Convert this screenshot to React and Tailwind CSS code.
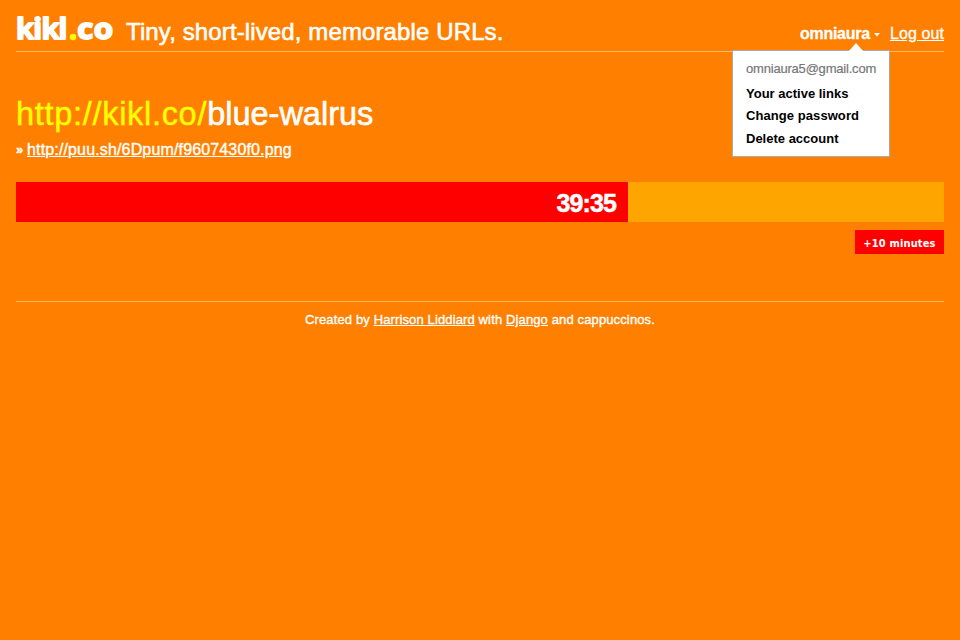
function Logo() {
  return (
    <svg width="98" height="32" viewBox="0 0 98 32" className="block shrink-0 overflow-visible" fontFamily="Open Sans, sans-serif" fontWeight="700" fontSize="29" strokeWidth="1.8" strokeLinejoin="round" strokeLinecap="round">
      <text x="-0.1 17.2 25.6 42.6" y="26.3" fill="#fff" stroke="#fff">kikl</text>
      <circle cx="57" cy="24" r="3.2" fill="#ff0" />
      <g transform="translate(61.3 26.3) scale(1.08 1)">
        <text x="0 15.3" y="0" fill="#fff" stroke="#fff">co</text>
      </g>
    </svg>
  );
}

function AccountMenu() {
  return (
    <div className="absolute right-[54px] top-[50px] h-[107px] w-[158px] border border-[#aaaaaa] bg-white px-[13px] pt-[9px] text-[13px] leading-[18px] text-black">
      <svg width="16" height="9" viewBox="0 0 16 9" className="absolute left-[115px] top-[-8px]">
        <path d="M0 9 8 0 16 9Z" fill="#fff" />
      </svg>
      <p className="whitespace-nowrap text-[#777777] tracking-[-0.2px] [-webkit-text-stroke:0.2px_#777777]">omniaura5@gmail.com</p>
      <ul className="mt-[5px] font-bold leading-[22.4px]">
        <li>Your active links</li>
        <li className="tracking-[0.07px]">Change password</li>
        <li>Delete account</li>
      </ul>
    </div>
  );
}

export default function App() {
  return (
    <div className="min-h-screen bg-[#ff8000] px-4 font-['Liberation_Sans',Arial,sans-serif] text-white">
      <header className="relative flex h-[52px] items-start border-b border-[#ffb666]">
        <div className="pt-[13px]"><Logo /></div>
        <p className="ml-[12px] mt-[16px] whitespace-nowrap text-[24px] leading-[32px] tracking-[0.12px] [-webkit-text-stroke:0.6px_white]">Tiny, short-lived, memorable URLs.</p>
        <div className="ml-auto flex pt-[23px] text-[16px] leading-[22px]">
          <span className="font-bold tracking-[-0.25px] [-webkit-text-stroke:0.3px_white]">omniaura</span>
          <svg width="6" height="4" viewBox="0 0 6 4" className="ml-[4px] mt-[10px]"><path d="M0 0H6L3 3.5Z" fill="#fff" /></svg>
          <a className="ml-[10px] tracking-[0.1px] underline [-webkit-text-stroke:0.3px_white]">Log out</a>
        </div>
        <AccountMenu />
      </header>

      <main>
        <h1 className="mt-[42px] whitespace-nowrap text-[32.5px] leading-[40px] [-webkit-text-stroke:0.6px_white]">
          <span className="tracking-[0.7px] text-[#ffff00] [-webkit-text-stroke:0.4px_#ffff00]">http://kikl.co/</span>blue-walrus
        </h1>
        <p className="mt-[4px] flex gap-[4px] whitespace-nowrap text-[16px] leading-[24px] [-webkit-text-stroke:0.4px_white]">
          <span className="w-[7px] text-[13px] font-bold">»</span>
          <a className="tracking-[0.15px] underline">http://puu.sh/6Dpum/f9607430f0.png</a>
        </p>
        <div className="mt-[20px] h-[40px] bg-[#ffa500]">
          <div className="h-full w-[612px] bg-[#ff0000] pr-[12px] text-right text-[25px] font-bold leading-[42px] tracking-[-0.9px] [-webkit-text-stroke:0.5px_white]">39:35</div>
        </div>
        <div className="mt-[8px] flex justify-end">
          <button className="h-[24px] w-[89px] whitespace-nowrap bg-[#ff0000] pt-[3px] text-center font-['DejaVu_Sans_Condensed','DejaVu_Sans',sans-serif] text-[11px] font-bold leading-[21px] tracking-[0.15px]">+10 minutes</button>
        </div>
      </main>

      <footer className="mt-[47px] border-t border-[#ffb666] pt-[9px] text-center text-[13px] leading-[18px] tracking-[0.13px] [-webkit-text-stroke:0.35px_white]">
        Created by <a className="underline">Harrison Liddiard</a> with <a className="underline">Django</a> and cappuccinos.
      </footer>
    </div>
  );
}
